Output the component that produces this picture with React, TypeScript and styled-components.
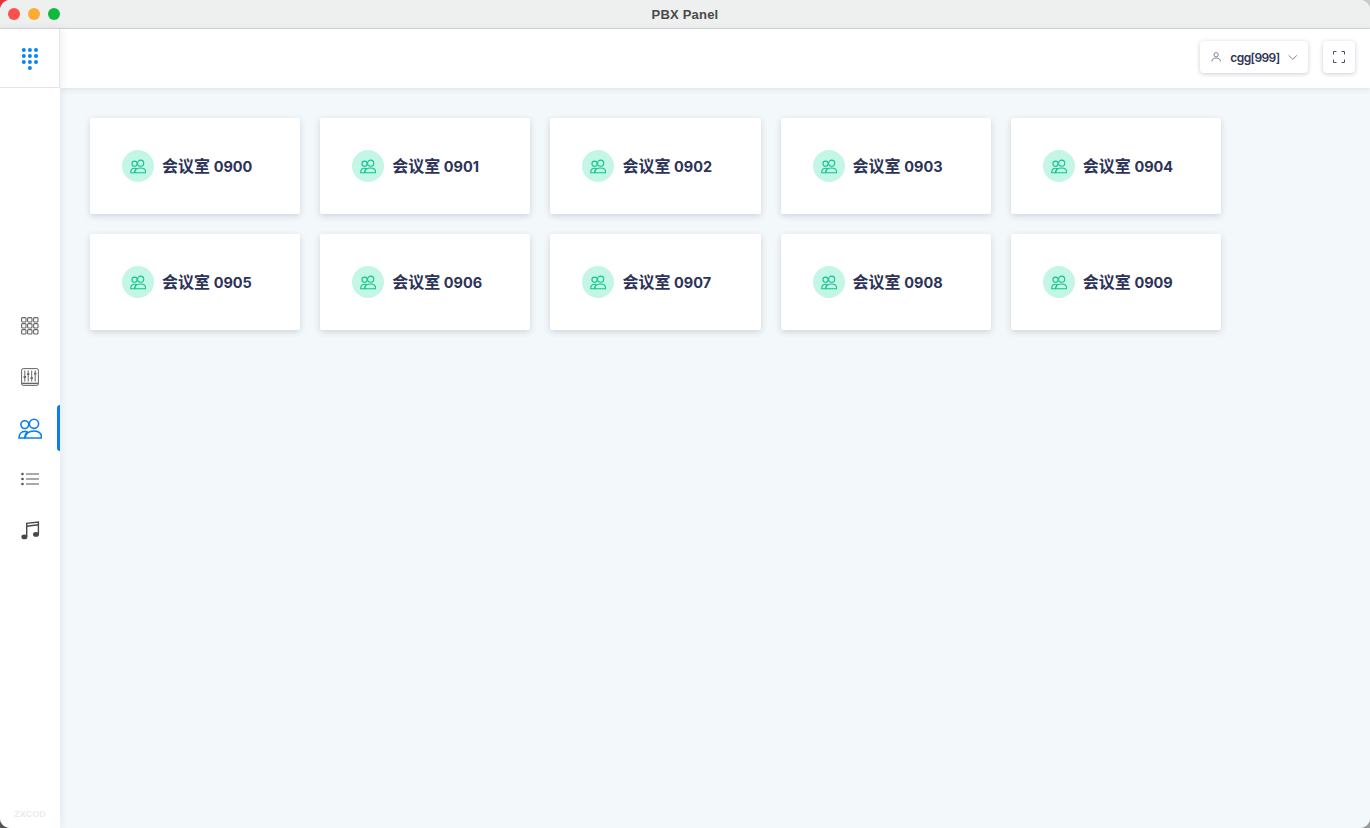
import React from "react";
import styled, { createGlobalStyle } from "styled-components";

const rooms = ["0900", "0901", "0902", "0903", "0904", "0905", "0906", "0907", "0908", "0909"];

const GlobalStyle = createGlobalStyle`
  html, body {
    margin: 0;
    padding: 0;
    height: 100%;
    background: #fff;
    overflow: hidden;
  }
  #root {
    height: 100%;
  }
  * {
    box-sizing: border-box;
  }
`;

const PeopleIcon = ({ size = 24 }: { size?: number }) => (
  <svg width={size} height={size} viewBox="0 -1 24 24" fill="none" stroke="currentColor" strokeWidth={1.6}>
    <circle cx="6.8" cy="7.6" r="3.9" />
    <circle cx="16" cy="6.8" r="4.6" />
    <path d="M1 21c0-3.8 2.4-6.6 6-6.6 .9 0 1.7.2 2.4.5-1.6 1.4-2.7 3.5-2.8 6.1H1z" />
    <path d="M7.2 21c0-4 3.6-7 8.8-7s7.6 3 7.6 7H7.2z" />
  </svg>
);

const KeypadIcon = () => (
  <svg width="18" height="23" viewBox="0 0 18 23" fill="#0a84f0">
    {[2.8, 8.9, 15].map((x) =>
      [3, 9, 15].map((y) => <circle key={`${x}-${y}`} cx={x} cy={y} r="2" />)
    )}
    <circle cx="8.9" cy="21" r="2" />
  </svg>
);

const GridIcon = () => (
  <svg width="18" height="18" viewBox="0 0 18 18" fill="none" stroke="#666" strokeWidth="1.1">
    {[0.6, 6.6, 12.6].map((x) =>
      [0.6, 6.6, 12.6].map((y) => <rect key={`${x}-${y}`} x={x} y={y} width="4.4" height="4.4" rx="1" />)
    )}
  </svg>
);

const MixerIcon = () => (
  <svg width="18" height="18" viewBox="0 0 18 18" fill="none" stroke="#666" strokeWidth="1">
    <rect x="0.6" y="0.6" width="16.8" height="16.8" rx="1.6" />
    <path d="M0.6 15.4h16.8" strokeWidth="1.4" />
    <path d="M3.8 2.5v11M7.2 2.5v11M10.7 2.5v11M14.2 2.5v11" />
    <path d="M2.6 9h2.4M6 6.2h2.4M9.5 10.2h2.4M13 5.6h2.4" strokeWidth="1.8" />
  </svg>
);

const ListIcon = () => (
  <svg width="18" height="14" viewBox="0 0 18 14" fill="none" stroke="#555" strokeWidth="1.2">
    <circle cx="1.5" cy="2" r="1.3" fill="#555" stroke="none" />
    <circle cx="1.5" cy="7" r="1.3" fill="#555" stroke="none" />
    <circle cx="1.5" cy="12" r="1.3" fill="#555" stroke="none" />
    <path d="M5 2h13M5 7h13M5 12h13" />
  </svg>
);

const MusicIcon = () => (
  <svg width="19" height="19" viewBox="0 0 19 19" fill="none">
    <path d="M5.7 15.5V2.4L17.4 1v12.2" stroke="#484848" strokeWidth="1.4" />
    <path d="M5.7 5.2l11.7-1.4" stroke="#484848" strokeWidth="1.4" />
    <ellipse cx="3.4" cy="15.9" rx="3" ry="2.4" fill="#484848" />
    <ellipse cx="15" cy="13.4" rx="3" ry="2.4" fill="#484848" />
  </svg>
);

const UserIcon = () => (
  <svg width="12" height="12" viewBox="0 0 12 12" fill="none" stroke="#6b7188" strokeWidth="1">
    <circle cx="6" cy="3.4" r="2.5" />
    <path d="M1 11.2c0-2.6 2.2-4 5-4s5 1.4 5 4" />
  </svg>
);

const ChevronIcon = () => (
  <svg width="11" height="7" viewBox="0 0 11 7" fill="none" stroke="#6b7188" strokeWidth="1">
    <path d="M0.7 1l4.8 4.6L10.3 1" />
  </svg>
);

const FullscreenIcon = () => (
  <svg width="12" height="12" viewBox="0 0 12 12" fill="none" stroke="#4b5270" strokeWidth="1">
    <path d="M0.5 3.5V0.5h3M8.5 0.5h3v3M11.5 8.5v3h-3M3.5 11.5h-3v-3" />
  </svg>
);

const App = () => {
  const navItems = [
    { icon: <GridIcon />, active: false },
    { icon: <MixerIcon />, active: false },
    { icon: <PeopleIcon />, active: true },
    { icon: <ListIcon />, active: false },
    { icon: <MusicIcon />, active: false },
  ];

  return (
    <>
      <GlobalStyle />
      <Desktop>
        <Window>
          <TitleBar>
            <Lights>
              <Light color="#fd4f4c" />
              <Light color="#fdac33" />
              <Light color="#0ebc3d" />
            </Lights>
            <Title>PBX Panel</Title>
          </TitleBar>
          <Body>
            <Sidebar>
              <LogoBox>
                <KeypadIcon />
              </LogoBox>
              <Nav>
                {navItems.map((item, i) => (
                  <NavItem key={i} $active={item.active}>
                    {item.icon}
                  </NavItem>
                ))}
              </Nav>
              <Brand>ZXCOD</Brand>
            </Sidebar>
            <Main>
              <Topbar>
                <UserButton>
                  <UserIcon />
                  <UserName>cgg[999]</UserName>
                  <ChevronIcon />
                </UserButton>
                <SquareButton>
                  <FullscreenIcon />
                </SquareButton>
              </Topbar>
              <Content>
                {rooms.map((room) => (
                  <RoomCard key={room}>
                    <RoomBadge>
                      <PeopleIcon size={16} />
                    </RoomBadge>
                    <RoomName>
                      会议室 <RoomNumber>{room}</RoomNumber>
                    </RoomName>
                  </RoomCard>
                ))}
              </Content>
            </Main>
          </Body>
        </Window>
      </Desktop>
    </>
  );
};

export default App;

// what shows through the rounded window corners
const Desktop = styled.div`
  width: 1370px;
  height: 828px;
  background:
    linear-gradient(135deg, #e8323c 0 10px, transparent 10px),
    linear-gradient(225deg, #c9c9c9 0 10px, transparent 10px),
    linear-gradient(45deg, #555 0 10px, transparent 10px),
    linear-gradient(315deg, #9a9a9a 0 10px, transparent 10px),
    #fff;
`;

const Window = styled.div`
  width: 100%;
  height: 100%;
  display: flex;
  flex-direction: column;
  overflow: hidden;
  border-radius: 10px;
  background: #fff;
`;

const TitleBar = styled.div`
  position: relative;
  flex: 0 0 29px;
  display: flex;
  align-items: center;
  justify-content: center;
  background: #eeefef;
  border-bottom: 1px solid #d6d6d6;
`;

const Lights = styled.div`
  position: absolute;
  left: 8px;
  top: 8px;
  display: flex;
  gap: 8px;
`;

const Light = styled.span<{ color: string }>`
  width: 12px;
  height: 12px;
  border-radius: 50%;
  background: ${(p) => p.color};
`;

const Title = styled.div`
  font: 700 13px "Liberation Sans", Arial, sans-serif;
  color: #4a4a4a;
  letter-spacing: 0.2px;
`;

const Body = styled.div`
  flex: 1;
  display: flex;
  min-height: 0;
`;

const Sidebar = styled.aside`
  position: relative;
  z-index: 2;
  flex: 0 0 60px;
  display: flex;
  flex-direction: column;
  background: #fff;
  box-shadow: 1px 0 8px rgba(60, 80, 110, 0.1);
`;

const LogoBox = styled.div`
  height: 59px;
  display: flex;
  align-items: center;
  justify-content: center;
  border-right: 1px solid #e4e4e4;
  border-bottom: 1px solid #e4e4e4;
`;

const Nav = styled.nav`
  display: flex;
  flex-direction: column;
  padding-top: 212.5px;
`;

const NavItem = styled.div<{ $active: boolean }>`
  position: relative;
  height: 51px;
  display: flex;
  align-items: center;
  justify-content: center;
  color: ${(p) => (p.$active ? "#0a7fe8" : "#555")};
  ${(p) =>
    p.$active &&
    `
    &::after {
      content: "";
      position: absolute;
      right: 0;
      top: 2.5px;
      width: 3px;
      height: 46px;
      background: #0a7fe8;
      border-radius: 3px 0 0 3px;
    }
  `}
`;

const Brand = styled.div`
  margin-top: auto;
  padding-bottom: 9px;
  text-align: center;
  font: 700 9px "Liberation Sans", Arial, sans-serif;
  color: #ececec;
`;

const Main = styled.main`
  flex: 1;
  display: flex;
  flex-direction: column;
  min-width: 0;
  background: #f3f8fa;
`;

const Topbar = styled.header`
  position: relative;
  z-index: 1;
  flex: 0 0 59px;
  display: flex;
  align-items: center;
  justify-content: flex-end;
  gap: 15px;
  padding: 0 15px 3px 0;
  background: #fff;
  box-shadow: 0 1px 6px rgba(60, 80, 110, 0.14);
`;

const UserButton = styled.div`
  width: 108px;
  height: 32px;
  display: flex;
  align-items: center;
  gap: 8px;
  padding: 0 11px;
  background: #fff;
  border-radius: 4px;
  box-shadow: 0 1px 4px rgba(40, 50, 80, 0.25);
`;

const UserName = styled.span`
  flex: 1;
  padding-left: 1px;
  font: 600 12px "Inter", "Noto Sans", sans-serif;
  letter-spacing: -0.6px;
  color: #2e3558;
  white-space: nowrap;
`;

const SquareButton = styled.div`
  width: 32px;
  height: 32px;
  display: flex;
  align-items: center;
  justify-content: center;
  background: #fff;
  border-radius: 4px;
  box-shadow: 0 1px 4px rgba(40, 50, 80, 0.25);
`;

const Content = styled.section`
  flex: 1;
  display: grid;
  grid-template-columns: repeat(5, 210.2px);
  grid-auto-rows: 96px;
  column-gap: 20px;
  row-gap: 20px;
  align-content: start;
  padding: 30px;
`;

const RoomCard = styled.div`
  display: flex;
  align-items: center;
  gap: 8px;
  padding: 0 32px;
  background: #fff;
  border-radius: 2px;
  box-shadow: 0 2px 6px rgba(60, 70, 100, 0.2);
`;

const RoomBadge = styled.div`
  width: 32px;
  height: 32px;
  flex: none;
  display: flex;
  align-items: center;
  justify-content: center;
  border-radius: 50%;
  background: #c3f6e5;
  color: #0ec48c;
`;

const RoomName = styled.div`
  margin-bottom: 2px;
  font: 700 16px "Noto Sans CJK SC", "Noto Sans", sans-serif;
  color: #2c3357;
  white-space: nowrap;
`;

const RoomNumber = styled.span`
  font: 700 14.5px "Inter", "Noto Sans", sans-serif;
`;
